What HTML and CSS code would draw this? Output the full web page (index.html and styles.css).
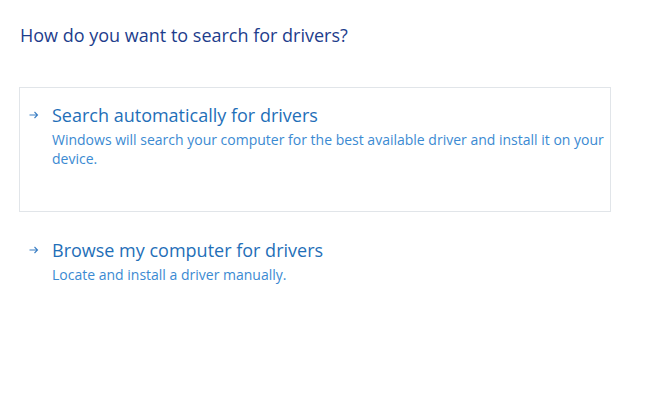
FILE: index.html
```html
<!DOCTYPE html>
<html lang="en">
<head>
  <meta charset="UTF-8">
  <title>Update Drivers</title>
  <link rel="stylesheet" href="styles.css">
</head>
<body>
  <div class="page">
    <h1 class="heading">How do you want to search for drivers?</h1>

    <div class="option option-boxed">
      <svg class="arrow" width="10" height="8" viewBox="0 0 10 8">
        <path d="M0.5 4H8.5M5.5 1L8.5 4L5.5 7" fill="none" stroke="#3b7fc4" stroke-width="1.1"/>
      </svg>
      <div class="option-text">
        <div class="option-title">Search automatically for drivers</div>
        <div class="option-desc">Windows will search your computer for the best available driver and install it on your device.</div>
      </div>
    </div>

    <div class="option">
      <svg class="arrow" width="10" height="8" viewBox="0 0 10 8">
        <path d="M0.5 4H8.5M5.5 1L8.5 4L5.5 7" fill="none" stroke="#3b7fc4" stroke-width="1.1"/>
      </svg>
      <div class="option-text">
        <div class="option-title">Browse my computer for drivers</div>
        <div class="option-desc">Locate and install a driver manually.</div>
      </div>
    </div>
  </div>
</body>
</html>
```

FILE: styles.css
```css
body {
  margin: 0;
  font-family: 'Open Sans', 'Noto Sans', sans-serif;
  background: #ffffff;
}
.page {
  width: 592px;
  padding: 23px 0 0 19px;
  display: flex;
  flex-direction: column;
}
.heading {
  margin: 0 0 40px 1px;
  font-size: 18px;
  font-weight: 400;
  line-height: 24px;
  color: #1d3d8c;
}
.option {
  display: flex;
  align-items: flex-start;
  gap: 13px;
  padding: 14px 0 0 9px;
  border: 1px solid transparent;
}
.option-boxed {
  height: 109px;
  border-color: #e1e5e9;
  margin-bottom: 10px;
}
.arrow {
  flex: none;
  margin-top: 9px;
}
.option-title {
  font-size: 18px;
  line-height: 26px;
  color: #1f6fb8;
}
.option-desc {
  margin-top: 2px;
  font-size: 14px;
  line-height: 19px;
  color: #3b8ad2;
}
```
